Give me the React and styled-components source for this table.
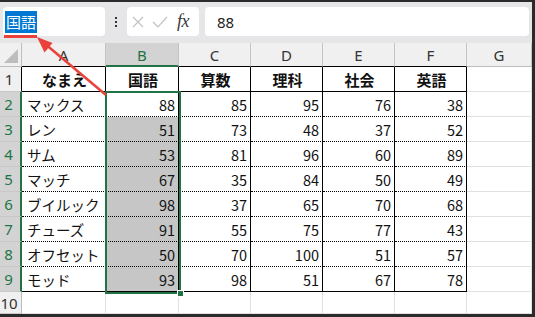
import React from 'react';
import styled, { createGlobalStyle } from 'styled-components';

const GlobalStyle = createGlobalStyle`
  html, body {
    margin: 0;
    padding: 0;
    background: #ffffff;
  }
  * {
    box-sizing: border-box;
  }
`;

const GREEN = '#217346';
const CJK = `"Noto Sans CJK JP", "Noto Sans", sans-serif`;
const UI = `"Noto Sans", "Open Sans", sans-serif`;

const Frame = styled.div`
  position: relative;
  width: 535px;
  height: 317px;
  border-top: 2px solid #2b2b2b;
  border-right: 3px solid #2b2b2b;
  border-bottom: 3px solid #2b2b2b;
  display: flex;
  flex-direction: column;
  overflow: hidden;
  background: #ffffff;
`;

const Toolbar = styled.div`
  height: 41px;
  flex-shrink: 0;
  background: #e6e6e9;
  display: flex;
  align-items: flex-start;
  padding: 5px 3px 0 3px;
`;

const NameBox = styled.div`
  width: 102px;
  height: 29px;
  background: #ffffff;
  border-radius: 4px;
  display: flex;
  align-items: center;
  padding-left: 2px;
`;

const Selected = styled.span`
  background: #0078d4;
  color: #ffffff;
  font-family: ${CJK};
  font-size: 15px;
  line-height: 22px;
  padding: 0 1px;
`;

const Kebab = styled.div`
  width: 22px;
  height: 29px;
  display: flex;
  flex-direction: column;
  align-items: center;
  justify-content: center;
  gap: 2px;
  & > i {
    width: 2px;
    height: 2px;
    background: #333;
    display: block;
  }
`;

const ActionBox = styled.div`
  width: 72px;
  height: 29px;
  background: #ffffff;
  border-radius: 4px;
  display: flex;
  align-items: center;
  padding-left: 5px;
  gap: 8px;
`;

const Fx = styled.span`
  font-family: "Liberation Serif", serif;
  font-style: italic;
  font-size: 18px;
  color: #3a3a3a;
  margin-left: 1px;
  letter-spacing: -0.5px;
`;

const FormulaBox = styled.div`
  flex: 1;
  margin-left: 6px;
  height: 29px;
  background: #ffffff;
  border-radius: 4px;
  display: flex;
  align-items: center;
  padding-left: 12px;
  font-family: ${UI};
  font-size: 15px;
  color: #222;
`;

const Sheet = styled.div`
  position: relative;
  flex: 1;
  display: grid;
  grid-template-columns: 22px 84px 73px 72px 72px 72px 72px 65px;
  grid-template-rows: 24px repeat(9, 25px) 1fr;
`;

const Corner = styled.div`
  background: #f0f0f0;
  border-right: 1px solid #bdbdbd;
  border-bottom: 1px solid #bdbdbd;
  display: flex;
  align-items: flex-end;
  justify-content: flex-end;
  padding: 0 3px 3px 0;
`;

const ColHead = styled.div`
  background: ${p => (p.$active ? '#d3d3d3' : '#f0f0f0')};
  color: ${p => (p.$active ? GREEN : '#333')};
  border-right: 1px solid #c4c4c4;
  border-bottom: ${p => (p.$active ? `2px solid ${GREEN}` : p.$table ? '1px solid #000' : '1px solid #bdbdbd')};
  font-family: ${UI};
  font-size: 15px;
  display: flex;
  align-items: center;
  justify-content: center;
  padding-top: ${p => (p.$active ? '1px' : '0')};
`;

const RowHead = styled.div`
  background: ${p => (p.$active ? '#d3d3d3' : '#f0f0f0')};
  color: ${p => (p.$active ? GREEN : '#333')};
  border-right: ${p => (p.$active ? `2px solid ${GREEN}` : p.$table ? '1px solid #000' : '1px solid #bdbdbd')};
  border-bottom: 1px solid #c8c8c8;
  font-family: ${UI};
  font-size: 15px;
  display: flex;
  align-items: center;
  justify-content: center;
  padding-right: 3px;
`;

const Cell = styled.div`
  background: ${p => (p.$shade ? '#c6c6c6' : '#ffffff')};
  border-right: 1px solid ${p => (p.$table ? '#000' : '#e1e1e1')};
  border-bottom: 1px ${p => p.$line || 'solid'} ${p => (p.$table ? '#000' : '#e1e1e1')};
  font-family: ${CJK};
  font-size: ${p => (p.$head ? '15px' : '14.5px')};
  font-weight: ${p => (p.$head ? 700 : 400)};
  color: #111;
  display: flex;
  align-items: center;
  justify-content: ${p => (p.$align === 'right' ? 'flex-end' : p.$align === 'center' ? 'center' : 'flex-start')};
  padding: 0 3px 0 5px;
  white-space: nowrap;
`;

const Selection = styled.div`
  position: absolute;
  left: 105px;
  top: 48px;
  width: 76px;
  height: 203px;
  border: 2px solid ${GREEN};
  pointer-events: none;
`;

const Handle = styled.div`
  position: absolute;
  right: -5px;
  bottom: -5px;
  width: 7px;
  height: 7px;
  background: ${GREEN};
  border: 1px solid #ffffff;
`;

const Annotation = styled.svg`
  position: absolute;
  left: 0;
  top: 0;
  pointer-events: none;
`;

const columns = ['A', 'B', 'C', 'D', 'E', 'F', 'G'];
const headers = ['なまえ', '国語', '算数', '理科', '社会', '英語'];
const rows = [
  ['マックス', 88, 85, 95, 76, 38],
  ['レン', 51, 73, 48, 37, 52],
  ['サム', 53, 81, 96, 60, 89],
  ['マッチ', 67, 35, 84, 50, 49],
  ['ブイルック', 98, 37, 65, 70, 68],
  ['チューズ', 91, 55, 75, 77, 43],
  ['オフセット', 50, 70, 100, 51, 57],
  ['モッド', 93, 98, 51, 67, 78],
];

export default function App() {
  return (
    <>
      <GlobalStyle />
      <Frame>
        <Toolbar>
          <NameBox>
            <Selected>国語</Selected>
          </NameBox>
          <Kebab>
            <i />
            <i />
            <i />
          </Kebab>
          <ActionBox>
            <svg width="12" height="12" viewBox="0 0 12 12">
              <path d="M1 1 L11 11 M11 1 L1 11" stroke="#c2c2c2" strokeWidth="1.2" fill="none" />
            </svg>
            <svg width="16" height="12" viewBox="0 0 16 12">
              <path d="M1 6 L6 11 L15 1" stroke="#c2c2c2" strokeWidth="1.2" fill="none" />
            </svg>
            <Fx>fx</Fx>
          </ActionBox>
          <FormulaBox>88</FormulaBox>
        </Toolbar>

        <Sheet>
          <Corner>
            <svg width="14" height="14" viewBox="0 0 14 14">
              <path d="M14 0 L14 14 L0 14 Z" fill="#bdbdbd" />
            </svg>
          </Corner>
          {columns.map((c, i) => (
            <ColHead key={c} $active={c === 'B'} $table={i < 6}>
              {c}
            </ColHead>
          ))}

          <RowHead $table>1</RowHead>
          {headers.map(h => (
            <Cell key={h} $table $head $align="center">
              {h}
            </Cell>
          ))}
          <Cell />

          {rows.map((r, ri) => {
            const line = ri === rows.length - 1 ? 'solid' : 'dotted';
            return (
              <React.Fragment key={ri}>
                <RowHead $active>{ri + 2}</RowHead>
                {r.map((v, ci) => (
                  <Cell
                    key={ci}
                    $table
                    $line={line}
                    $align={ci === 0 ? 'left' : 'right'}
                    $shade={ci === 1 && ri > 0}
                  >
                    {v}
                  </Cell>
                ))}
                <Cell />
              </React.Fragment>
            );
          })}

          <RowHead>10</RowHead>
          {columns.map(c => (
            <Cell key={c} />
          ))}

          <Selection>
            <Handle />
          </Selection>
        </Sheet>

        <Annotation width="535" height="317" viewBox="0 0 535 317">
          <rect x="4" y="33" width="33" height="3" fill="#e8423b" />
          <line x1="44" y1="41" x2="106" y2="93" stroke="#e8423b" strokeWidth="2.5" />
          <polygon points="37,35 52.5,41 44.5,50.5" fill="#e8423b" />
        </Annotation>
      </Frame>
    </>
  );
}
